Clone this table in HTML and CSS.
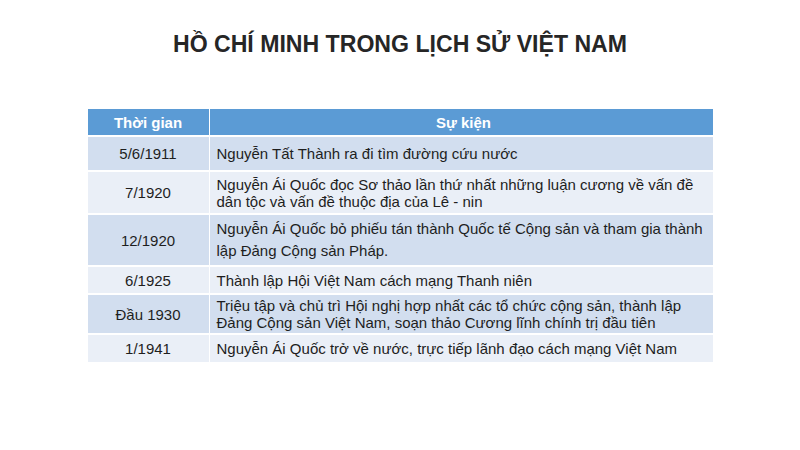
FILE: index.html
```html
<!DOCTYPE html>
<html lang="vi">
<head>
<meta charset="utf-8">
<link rel="stylesheet" href="styles.css">
</head>
<body>
<div class="slide">
  <h1 class="title">HỒ CHÍ MINH TRONG LỊCH SỬ VIỆT NAM</h1>
  <table class="timeline">
    <thead>
      <tr class="h"><th class="c-date">Thời gian</th><th class="c-event">Sự kiện</th></tr>
    </thead>
    <tbody>
      <tr class="r1 dark"><td class="c-date">5/6/1911</td><td class="c-event">Nguyễn Tất Thành ra đi tìm đường cứu nước</td></tr>
      <tr class="r2 light"><td class="c-date">7/1920</td><td class="c-event">Nguyễn Ái Quốc đọc Sơ thảo lần thứ nhất những luận cương về vấn đề dân tộc và vấn đề thuộc địa của Lê - nin</td></tr>
      <tr class="r3 dark"><td class="c-date">12/1920</td><td class="c-event tall">Nguyễn Ái Quốc bỏ phiếu tán thành Quốc tế Cộng sản và tham gia thành lập Đảng Cộng sản Pháp.</td></tr>
      <tr class="r4 light"><td class="c-date">6/1925</td><td class="c-event">Thành lập Hội Việt Nam cách mạng Thanh niên</td></tr>
      <tr class="r5 dark"><td class="c-date">Đầu 1930</td><td class="c-event">Triệu tập và chủ trì Hội nghị hợp nhất các tổ chức cộng sản, thành lập Đảng Cộng sản Việt Nam, soạn thảo Cương lĩnh chính trị đầu tiên</td></tr>
      <tr class="r6 light"><td class="c-date">1/1941</td><td class="c-event">Nguyễn Ái Quốc trở về nước, trực tiếp lãnh đạo cách mạng Việt Nam</td></tr>
    </tbody>
  </table>
</div>
</body>
</html>
```

FILE: styles.css
```css
html, body {
  margin: 0;
  padding: 0;
  background: #ffffff;
}
.slide {
  width: 800px;
  height: 450px;
  padding-top: 31px;
  box-sizing: border-box;
  font-family: "Liberation Sans", Arial, sans-serif;
}
.title {
  margin: 0;
  font-size: 23.1px;
  line-height: 26px;
  font-weight: bold;
  text-align: center;
  color: #262626;
}
.timeline {
  margin: 52px auto 0;
  width: 625px;
  border-collapse: collapse;
  table-layout: fixed;
  font-size: 15px;
  color: #1e1e1e;
}
.timeline th, .timeline td {
  padding: 0 2px 0 7px;
  vertical-align: middle;
  line-height: 17px;
  border-left: 1px solid #ffffff;
}
.timeline th:first-child, .timeline td:first-child {
  border-left: none;
}
.timeline tbody tr {
  border-top: 2px solid #ffffff;
}
.c-date {
  width: 121px;
  text-align: center;
  padding: 0 !important;
}
.h th {
  background: #5b9bd5;
  color: #ffffff;
  font-weight: bold;
  height: 26px;
  text-align: center;
}
.dark td { background: #d2deef; }
.light td { background: #eaeff7; }
.r1 td { height: 33px; }
.r2 td { height: 41px; }
.r3 td { height: 50px; }
.r3 .tall { line-height: 22px; }
.r4 td { height: 26px; }
.r5 td { height: 38px; }
.r6 td { height: 27px; }
```
